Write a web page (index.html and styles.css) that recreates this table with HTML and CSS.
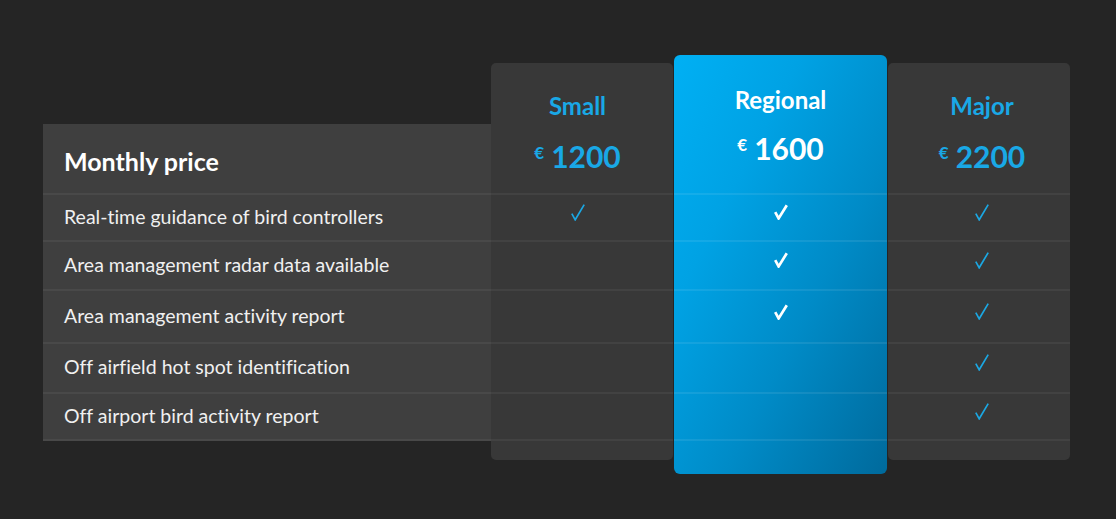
FILE: index.html
```html
<!DOCTYPE html>
<html lang="en">
<head>
<meta charset="utf-8">
<title>Pricing</title>
<link rel="stylesheet" href="styles.css">
</head>
<body>
<main class="pricing">
  <section class="col features">
    <div class="head"><h2 class="features-title">Monthly price</h2></div>
    <div class="rows">
      <div class="cell label">Real-time guidance of bird controllers</div>
      <div class="cell label">Area management radar data available</div>
      <div class="cell label">Area management activity report</div>
      <div class="cell label">Off airfield hot spot identification</div>
      <div class="cell label">Off airport bird activity report</div>
    </div>
  </section>

  <section class="col plan plan--small">
    <div class="head">
      <div class="plan-name">Small</div>
      <div class="price"><span class="cur">€</span>1200</div>
    </div>
    <div class="rows">
      <div class="cell check"><svg class="tick" viewBox="0 0 14 17" width="14" height="17"><path d="M0.8 9.6 L4.2 15.8 L13.2 0.6"/></svg></div>
      <div class="cell check"></div>
      <div class="cell check"></div>
      <div class="cell check"></div>
      <div class="cell check"></div>
    </div>
    <div class="foot"></div>
  </section>

  <section class="col plan plan--regional">
    <div class="head">
      <div class="plan-name">Regional</div>
      <div class="price"><span class="cur">€</span>1600</div>
    </div>
    <div class="rows">
      <div class="cell check"><svg class="tick tick--bold" viewBox="0 0 14 16" width="14" height="16"><path d="M1.2 8.2 L4.6 14.4 L12.8 1.2"/></svg></div>
      <div class="cell check"><svg class="tick tick--bold" viewBox="0 0 14 16" width="14" height="16"><path d="M1.2 8.2 L4.6 14.4 L12.8 1.2"/></svg></div>
      <div class="cell check"><svg class="tick tick--bold" viewBox="0 0 14 16" width="14" height="16"><path d="M1.2 8.2 L4.6 14.4 L12.8 1.2"/></svg></div>
      <div class="cell check"></div>
      <div class="cell check"></div>
    </div>
    <div class="foot"></div>
  </section>

  <section class="col plan plan--major">
    <div class="head">
      <div class="plan-name">Major</div>
      <div class="price"><span class="cur">€</span>2200</div>
    </div>
    <div class="rows">
      <div class="cell check"><svg class="tick" viewBox="0 0 14 17" width="14" height="17"><path d="M0.8 9.6 L4.2 15.8 L13.2 0.6"/></svg></div>
      <div class="cell check"><svg class="tick" viewBox="0 0 14 17" width="14" height="17"><path d="M0.8 9.6 L4.2 15.8 L13.2 0.6"/></svg></div>
      <div class="cell check"><svg class="tick" viewBox="0 0 14 17" width="14" height="17"><path d="M0.8 9.6 L4.2 15.8 L13.2 0.6"/></svg></div>
      <div class="cell check"><svg class="tick" viewBox="0 0 14 17" width="14" height="17"><path d="M0.8 9.6 L4.2 15.8 L13.2 0.6"/></svg></div>
      <div class="cell check"><svg class="tick" viewBox="0 0 14 17" width="14" height="17"><path d="M0.8 9.6 L4.2 15.8 L13.2 0.6"/></svg></div>
    </div>
    <div class="foot"></div>
  </section>
</main>
</body>
</html>
```

FILE: styles.css
```css
html, body {
  margin: 0;
  padding: 0;
}

body {
  background: #252525;
  font-family: Lato, "Liberation Sans", sans-serif;
  font-variant-ligatures: none;
  color: #f2f2f2;
  width: 1116px;
  height: 519px;
  overflow: hidden;
}

.pricing {
  display: flex;
  align-items: flex-start;
  padding: 55px 0 0 43px;
}

.col {
  display: flex;
  flex-direction: column;
  box-sizing: border-box;
}

/* feature labels column */
.features {
  width: 448px;
  margin-top: 69px;
  background: #3f3f3f;
}

.features .head {
  height: 69px;
  display: flex;
  align-items: center;
  padding: 5px 0 0 21px;
  box-sizing: border-box;
}

.features-title {
  margin: 0;
  font-size: 25px;
  font-weight: 700;
  color: #ffffff;
  line-height: 28px;
}

.rows {
  display: flex;
  flex-direction: column;
}

.cell {
  height: 49.5px;
  box-sizing: border-box;
  border-top: 2px solid rgba(255, 255, 255, 0.055);
  display: flex;
  align-items: center;
}

.cell:first-child {
  height: 46.5px;
}

.cell:nth-child(3) {
  height: 53px;
}

.cell:last-child {
  border-bottom: 2px solid rgba(255, 255, 255, 0.055);
  height: 49.5px;
}

.label {
  padding: 0 0 2px 21px;
  font-size: 19.5px;
  color: #f0f0f0;
}

/* plan cards */
.plan {
  width: 182px;
  background: #383838;
  border-radius: 5px;
  overflow: hidden;
  text-align: center;
}

.plan .head {
  box-sizing: border-box;
  height: 130px;
  padding-top: 29px;
}

.plan .foot {
  height: 19px;
}

.plan--small {
  margin-top: 8px;
}

.plan--small .head,
.plan--small .check {
  padding-right: 9px;
}

.plan--major {
  margin-top: 8px;
  margin-left: 1px;
}

.plan--major .head,
.plan--major .check {
  padding-left: 6px;
}

.plan--regional {
  width: 213px;
  margin-left: 1px;
  border-radius: 6px;
  background: linear-gradient(to bottom right, #00b0f4 0%, #00a2e4 30%, #008bc7 62%, #006a9c 100%);
}

.plan--regional .head {
  height: 138px;
  padding-top: 31px;
}

.plan--regional .cell {
  border-color: rgba(255, 255, 255, 0.08);
}

.plan--regional .foot {
  height: 33px;
}

.plan-name {
  font-size: 24px;
  font-weight: 700;
  line-height: 28px;
  color: #19a8e6;
}

.price {
  margin-top: 19px;
  font-size: 30px;
  font-weight: 700;
  line-height: 34px;
  color: #19a8e6;
}

.cur {
  display: inline-block;
  vertical-align: top;
  font-size: 17px;
  line-height: 17px;
  margin: 5px 7px 0 0;
}

.plan--regional .plan-name,
.plan--regional .price {
  color: #ffffff;
}

.plan--regional .price {
  margin-top: 17px;
}

.check {
  justify-content: center;
  padding-bottom: 10px;
}

.tick {
  display: block;
  fill: none;
  stroke: #1ba7e2;
  stroke-width: 1.7;
  stroke-linejoin: miter;
}

.tick--bold {
  stroke: #ffffff;
  stroke-width: 2.7;
}
```
